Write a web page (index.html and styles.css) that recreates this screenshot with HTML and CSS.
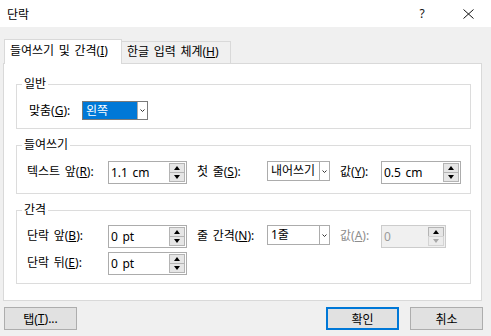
FILE: index.html
```html
<!DOCTYPE html>
<html lang="ko">
<head>
  <meta charset="UTF-8">
  <title>단락</title>
  <link rel="stylesheet" href="styles.css">
</head>
<body>
<div id="dialog">

  <div class="titlebar">
    <span class="title">단락</span>
    <span class="caption-btn">?</span>
    <span class="caption-btn">
      <svg width="11" height="10" viewBox="0 0 11 10"><path d="M0.5 0.5 L10.5 9.5 M10.5 0.5 L0.5 9.5" stroke="#111" stroke-width="1" fill="none"/></svg>
    </span>
  </div>

  <div class="tabs">
    <div class="tab active">들여쓰기 및 간격(<u>I</u>)</div>
    <div class="tab">한글 입력 체계(<u>H</u>)</div>
  </div>

  <div class="panel">

    <div class="group general">
      <span class="legend">일반</span>
      <div class="row">
        <span class="label">맞춤(<u>G</u>):</span>
        <div class="combo selected">
          <span class="value">왼쪽</span>
          <span class="drop"><svg width="5" height="3" viewBox="0 0 5 3"><path d="M0.5 0.5 L2.5 2.5 L4.5 0.5" stroke="#333" fill="none"/></svg></span>
        </div>
      </div>
    </div>

    <div class="group indent">
      <span class="legend">들여쓰기</span>
      <div class="row">
        <span class="label">텍스트 앞(<u>R</u>):</span>
        <div class="spin">
          <span class="value">1.1 cm</span>
          <span class="arrows"><span class="up"></span><span class="down"></span></span>
        </div>
        <span class="label">첫 줄(<u>S</u>):</span>
        <div class="combo">
          <span class="value">내어쓰기</span>
          <span class="drop"><svg width="5" height="3" viewBox="0 0 5 3"><path d="M0.5 0.5 L2.5 2.5 L4.5 0.5" stroke="#333" fill="none"/></svg></span>
        </div>
        <span class="label">값(<u>Y</u>):</span>
        <div class="spin wide">
          <span class="value">0.5 cm</span>
          <span class="arrows"><span class="up"></span><span class="down"></span></span>
        </div>
      </div>
    </div>

    <div class="group spacing">
      <span class="legend">간격</span>
      <div class="row">
        <span class="label">단락 앞(<u>B</u>):</span>
        <div class="spin">
          <span class="value">0 pt</span>
          <span class="arrows"><span class="up"></span><span class="down"></span></span>
        </div>
        <span class="label">줄 간격(<u>N</u>):</span>
        <div class="combo">
          <span class="value">1줄</span>
          <span class="drop"><svg width="5" height="3" viewBox="0 0 5 3"><path d="M0.5 0.5 L2.5 2.5 L4.5 0.5" stroke="#333" fill="none"/></svg></span>
        </div>
        <span class="label disabled">값(<u>A</u>):</span>
        <div class="spin narrow disabled">
          <span class="value">0</span>
          <span class="arrows"><span class="up"></span><span class="down"></span></span>
        </div>
      </div>
      <div class="row">
        <span class="label">단락 뒤(<u>E</u>):</span>
        <div class="spin">
          <span class="value">0 pt</span>
          <span class="arrows"><span class="up"></span><span class="down"></span></span>
        </div>
      </div>
    </div>

  </div>

  <div class="footer">
    <div class="btn tabs-btn">탭(<u>T</u>)...</div>
    <div class="btn default">확인</div>
    <div class="btn">취소</div>
  </div>

</div>
</body>
</html>
```

FILE: styles.css
```css
body {
  margin: 0;
  background: #f0f0f0;
  font-family: "Noto Sans", "Noto Sans CJK KR", sans-serif;
  font-size: 12px;
  word-spacing: 1.5px;
  color: #000;
}

u {
  text-underline-offset: 1px;
}

#dialog {
  width: 491px;
  height: 336px;
  overflow: hidden;
}

/* title bar */

.titlebar {
  display: flex;
  align-items: center;
  height: 27px;
  background: #fff;
}

.title {
  flex: 1;
  padding-left: 7px;
}

.caption-btn {
  display: flex;
  align-items: center;
  justify-content: center;
  width: 46px;
  height: 27px;
  color: #111;
}

/* tabs */

.tabs {
  display: flex;
  align-items: flex-end;
  height: 24px;
  margin-top: 12px;
  padding-left: 4px;
}

.tab {
  box-sizing: border-box;
  height: 22px;
  width: 110px;
  padding-left: 5px;
  border: 1px solid #d9d9d9;
  border-bottom: none;
  background: #f0f0f0;
  line-height: 20px;
  white-space: nowrap;
}

.tab.active {
  position: relative;
  z-index: 1;
  width: 118px;
  height: 25px;
  margin-bottom: -1px;
  background: #fff;
  line-height: 21px;
}

.tab + .tab {
  margin-left: -1px;
}

/* panel and groups */

.panel {
  margin: 0 9px 0 3px;
  padding: 20px 10px 16px 12px;
  border: 1px solid #d9d9d9;
  background: #fff;
}

.group {
  position: relative;
  box-sizing: border-box;
  border: 1px solid #dcdcdc;
  padding-left: 10px;
}

.group + .group {
  margin-top: 16px;
}

.legend {
  position: absolute;
  top: -9px;
  left: 5px;
  padding: 0 2px;
  background: #fff;
  line-height: 16px;
}

.general {
  height: 45px;
  padding-top: 16px;
  padding-left: 12px;
}

.indent {
  height: 49px;
  padding-top: 15px;
}

.spacing {
  height: 74px;
  padding-top: 14px;
}

.row {
  display: grid;
  grid-template-columns: 81px 89px 70px 73px 41px auto;
  align-items: start;
}

.row + .row {
  margin-top: 4px;
}

.general .row {
  grid-template-columns: 53px auto;
}

.label {
  line-height: 22px;
  white-space: nowrap;
}

.general .label {
  line-height: 19px;
}

.label.disabled {
  color: #8d8d8d;
}

/* controls */

.spin {
  box-sizing: border-box;
  display: flex;
  width: 79px;
  height: 23px;
  border: 1px solid #acacac;
  background: #fff;
}

.spin.wide {
  width: 80px;
}

.spin.narrow {
  width: 65px;
}

.spin .value {
  flex: 1;
  padding-left: 2px;
  line-height: 21px;
}

.arrows {
  display: flex;
  flex-direction: column;
  width: 16px;
  padding: 1px 1px 1px 0;
}

.arrows span {
  flex: 1;
  display: flex;
  align-items: center;
  justify-content: center;
  border: 1px solid #b4b4b4;
  background: #e6e6e6;
}

.arrows .down {
  margin-top: -1px;
}

.arrows .up::after,
.arrows .down::after {
  content: "";
  border-left: 3.5px solid transparent;
  border-right: 3.5px solid transparent;
}

.arrows .up::after {
  border-bottom: 4px solid #000;
}

.arrows .down::after {
  border-top: 4px solid #000;
}

.spin.disabled {
  border-color: #cccccc;
  background: #f0f0f0;
  color: #9a9a9a;
}

.spin.disabled .arrows .down {
  border-color: #d4d4d4;
  background: #ececec;
}

.spin.disabled .arrows .down::after {
  border-top-color: #a8a8a8;
}

.combo {
  box-sizing: border-box;
  display: flex;
  width: 63px;
  height: 20px;
  border: 1px solid #acacac;
  background: #fff;
  overflow: hidden;
}

.combo .value {
  flex: 1;
  min-width: 0;
  padding-left: 3px;
  line-height: 18px;
  white-space: nowrap;
  overflow: hidden;
}

.combo .drop {
  display: flex;
  align-items: center;
  justify-content: center;
  width: 9px;
  border-left: 1px solid #acacac;
}

.combo.selected {
  width: 66px;
  height: 19px;
  border-color: #7a7a7a;
}

.combo.selected .value {
  background: #0078d7;
  color: #fff;
  line-height: 17px;
}

/* footer buttons */

.footer {
  display: flex;
  gap: 11px;
  padding: 6px 8px 0 4px;
}

.btn {
  box-sizing: border-box;
  display: flex;
  align-items: center;
  justify-content: center;
  width: 73px;
  height: 23px;
  border: 1px solid #adadad;
  background: #e1e1e1;
}

.btn.tabs-btn {
  margin-right: auto;
}

.btn.default {
  border: 2px solid #0078d7;
}
```
